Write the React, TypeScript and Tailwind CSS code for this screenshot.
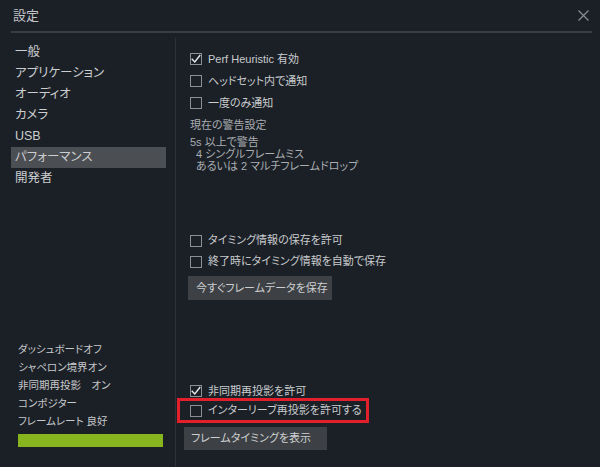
import React from 'react'

function Check({ checked }: { checked?: boolean }) {
  return (
    <span className="relative w-[12px] h-[12px] border border-[#8c9096] shrink-0">
      {checked && (
        <svg className="absolute -left-[1px] -top-[1px] w-[12px] h-[12px]" viewBox="0 0 12 12" fill="none">
          <path d="M2.2 6.2 L4.8 9 L9.8 2.6" stroke="#e6e7e8" strokeWidth={1.4} strokeLinecap="square" />
        </svg>
      )}
    </span>
  )
}

function Row({ label, checked, h = 'h-[22px]' }: { label: string; checked?: boolean; h?: string }) {
  return (
    <div className={`flex items-center ${h}`}>
      <Check checked={checked} />
      <span className="ml-[6px] text-[11px] text-[#c9cbcd] whitespace-nowrap">{label}</span>
    </div>
  )
}

const menu = ['一般', 'アプリケーション', 'オーディオ', 'カメラ', 'USB', 'パフォーマンス', '開発者']
const status = ['ダッシュボードオフ', 'シャペロン境界オン', '非同期再投影　オン', 'コンポジター', 'フレームレート 良好']

export default function App() {
  return (
    <div className="w-[600px] h-[467px] bg-[#1b2027] flex flex-col overflow-hidden font-['Liberation_Sans','Noto_Sans_CJK_JP',sans-serif] [font-feature-settings:'palt']">
      <div className="h-[31px] flex items-center justify-between pl-[13px] pr-[11px]">
        <span className="text-[13px] text-[#c3c5c8]">設定</span>
        <svg className="w-[11px] h-[11px]" viewBox="0 0 11 11">
          <path d="M0.5 0.5 L10.5 10.5 M10.5 0.5 L0.5 10.5" stroke="#8a8e93" strokeWidth={1.2} />
        </svg>
      </div>
      <div className="ml-[11px] mr-[8px] h-[2px] bg-[#393e45]" />

      <div className="flex flex-1 pt-[5px]">
        <div className="w-[176px] border-r border-[#2d3239] flex flex-col pl-[11px] pr-[9px] pt-[4px] pb-[20px]">
          {menu.map(m => (
            <div
              key={m}
              className={`h-[21px] px-[4px] flex items-center text-[12.5px] text-[#cbcdcf] whitespace-nowrap ${m === 'パフォーマンス' ? 'bg-[#4b4e52]' : ''}`}
            >
              {m}
            </div>
          ))}
          <div className="mt-auto pl-[7px]">
            {status.map(s => (
              <div key={s} className="h-[18px] flex items-center text-[10.5px] text-[#c6c8ca] whitespace-pre">
                {s}
              </div>
            ))}
            <div className="mt-[3px] h-[13px] w-[145px] bg-[#86b51d]" />
          </div>
        </div>

        <div className="flex-1 flex flex-col pl-[14px] pt-[10px] pb-[17px]">
          <Row label="Perf Heuristic 有効" checked />
          <Row label="ヘッドセット内で通知" />
          <Row label="一度のみ通知" />
          <div className="h-[22px] flex items-center text-[11px] text-[#a9adb1]">現在の警告設定</div>
          <div className="text-[11px] leading-[12px] text-[#a9adb1] whitespace-nowrap">
            <div>5s 以上で警告</div>
            <div className="pl-[6px]">4 シングルフレームミス</div>
            <div className="pl-[6px]">あるいは 2 マルチフレームドロップ</div>
          </div>

          <div className="mt-[58px]">
            <Row label="タイミング情報の保存を許可" h="h-[21px]" />
            <Row label="終了時にタイミング情報を自動で保存" h="h-[21px]" />
            <button className="mt-[4px] -ml-[2px] h-[24px] w-[144px] bg-[#3d4145] text-left pl-[8px] text-[11px] text-[#cdcfd1] whitespace-nowrap">
              今すぐフレームデータを保存
            </button>
          </div>

          <div className="mt-auto">
            <Row label="非同期再投影を許可" checked h="h-[14px]" />
            <div className="-ml-[13px] w-[192px] h-[25px] border-[3px] border-[#e21f2a] pl-[10px] flex items-center">
              <Check />
              <span className="ml-[6px] text-[11px] text-[#c9cbcd] whitespace-nowrap">インターリーブ再投影を許可する</span>
            </div>
            <button className="mt-[4px] -ml-[6px] h-[23px] w-[143px] bg-[#3d4145] text-left pl-[7px] text-[11px] text-[#cdcfd1] whitespace-nowrap">
              フレームタイミングを表示
            </button>
          </div>
        </div>
      </div>
    </div>
  )
}
